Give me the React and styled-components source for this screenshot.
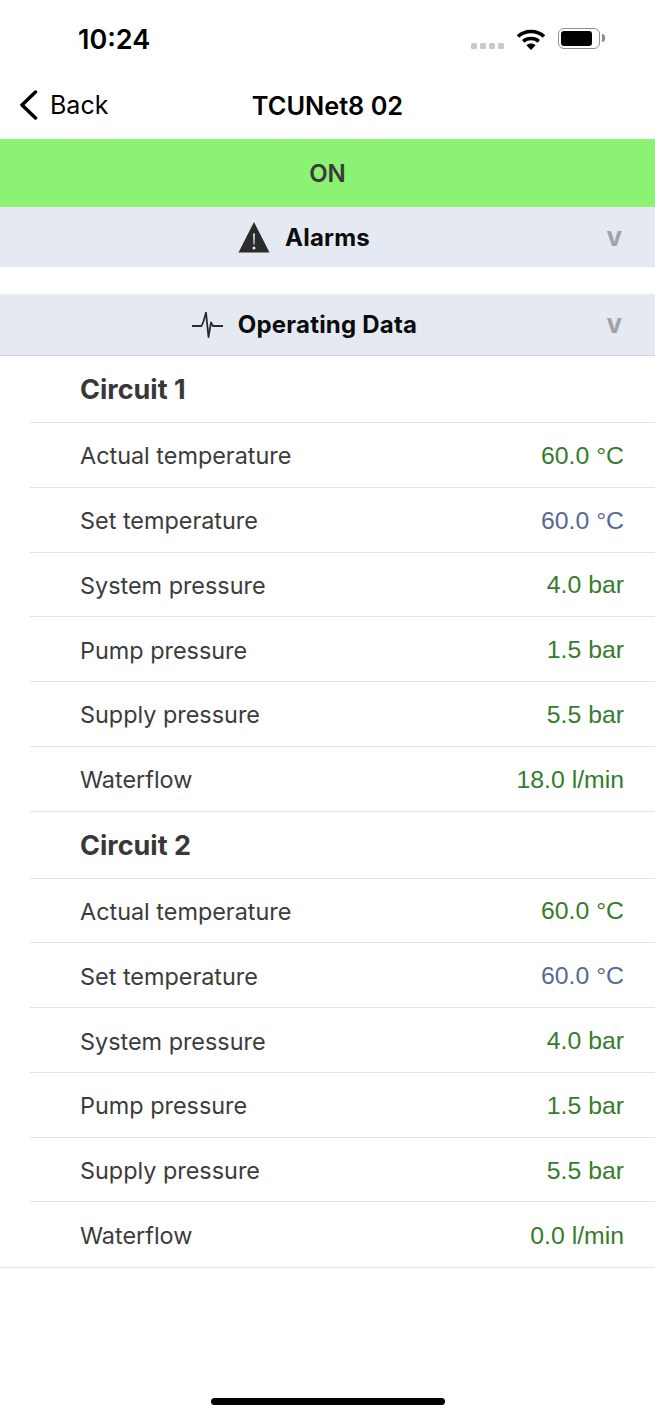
import styled, { createGlobalStyle } from "styled-components";

const GlobalStyle = createGlobalStyle`
  html, body {
    margin: 0;
    padding: 0;
    background: #fff;
  }
  body {
    font-family: "Inter", "Liberation Sans", sans-serif;
  }
`;

const CIRCUITS = [
  {
    name: "Circuit 1",
    rows: [
      ["Actual temperature", "60.0 °C"],
      ["Set temperature", "60.0 °C", true],
      ["System pressure", "4.0 bar"],
      ["Pump pressure", "1.5 bar"],
      ["Supply pressure", "5.5 bar"],
      ["Waterflow", "18.0 l/min"],
    ],
  },
  {
    name: "Circuit 2",
    rows: [
      ["Actual temperature", "60.0 °C"],
      ["Set temperature", "60.0 °C", true],
      ["System pressure", "4.0 bar"],
      ["Pump pressure", "1.5 bar"],
      ["Supply pressure", "5.5 bar"],
      ["Waterflow", "0.0 l/min"],
    ],
  },
];

function App() {
  return (
    <Page>
      <GlobalStyle />
      <StatusBar>
        <Clock>10:24</Clock>
        <StatusIcons>
          <Signal>
            <i />
            <i />
            <i />
            <i />
          </Signal>
          <svg width="30" height="22" viewBox="0 0 30 22">
            <path d="M2 8.500C9 1.800 21 1.800 28 8.500" fill="none" stroke="#000" strokeWidth="3.6" />
            <path d="M7.200 13.400C11.500 9.600 18.500 9.600 22.800 13.400" fill="none" stroke="#000" strokeWidth="3.6" />
            <path d="M10.400 17.200C13 15 17 15 19.600 17.200L15 22Z" fill="#000" />
          </svg>
          <Battery>
            <BatteryFill />
          </Battery>
        </StatusIcons>
      </StatusBar>
      <NavBar>
        <BackLink>
          <svg width="20" height="30" viewBox="0 0 20 30">
            <path d="M17.500 2L4 15L17.500 28" fill="none" stroke="#000" strokeWidth="3.500" strokeLinecap="round" strokeLinejoin="round" />
          </svg>
          <span>Back</span>
        </BackLink>
        <NavTitle>TCUNet8 02</NavTitle>
      </NavBar>
      <StateBanner>ON</StateBanner>
      <SectionHeader>
        <SectionIcon>
          <svg width="32" height="32" viewBox="0 0 32 32">
            <path fillRule="evenodd" fill="#2b2b2b" d="M16 1L31.500 31.500H.5ZM15.100 12.500L15.500 23.500H16.500L16.900 12.500ZM16 25.500a1.500 1.500 0 1 0 0 3a1.500 1.500 0 0 0 0-3Z" />
          </svg>
        </SectionIcon>
        <SectionTitle>Alarms</SectionTitle>
        <Chevron>v</Chevron>
      </SectionHeader>
      <SectionHeader $spaced $bordered>
        <SectionIcon>
          <svg width="31" height="26" viewBox="0 0 31 26">
            <path d="M0 14H9.500L11.500 9.500L14 .5L16.500 25L19 10.500L21 14H31" fill="none" stroke="#2b2b2b" strokeWidth="1.800" strokeLinejoin="round" />
          </svg>
        </SectionIcon>
        <SectionTitle>Operating Data</SectionTitle>
        <Chevron>v</Chevron>
      </SectionHeader>
      <CircuitList>
        {CIRCUITS.map((circuit) => (
          <Circuit key={circuit.name}>
            <CircuitTitle>{circuit.name}</CircuitTitle>
            {circuit.rows.map(([label, value, isSetpoint]) => (
              <DataRow key={label}>
                <Label>{label}</Label>
                <Value $setpoint={isSetpoint}>{value}</Value>
              </DataRow>
            ))}
          </Circuit>
        ))}
      </CircuitList>
      <EndRule />
      <HomeIndicator />
    </Page>
  );
}

const Page = styled.div`
  position: relative;
  width: 655px;
  height: 1417px;
  overflow: hidden;
  background: #fff;
`;

const StatusBar = styled.div`
  height: 70px;
  display: flex;
  align-items: flex-start;
  justify-content: space-between;
  padding: 0 55px 0 78px;
  box-sizing: border-box;
`;

const Clock = styled.div`
  margin-top: 24px;
  font-size: 27px;
  line-height: 32px;
  font-weight: 600;
  color: #000;
`;

const StatusIcons = styled.div`
  display: flex;
  align-items: flex-start;
  margin-top: 28px;
`;

const Signal = styled.div`
  display: flex;
  gap: 3px;
  margin: 15px 12px 0 0;
  i {
    width: 6px;
    height: 6px;
    border-radius: 1.500px;
    background: #c8c8c8;
  }
`;

const Battery = styled.div`
  position: relative;
  width: 42px;
  height: 21px;
  margin-left: 12px;
  padding: 2px;
  box-sizing: border-box;
  border: 1.500px solid #8e8e8e;
  border-radius: 6px;
  &::after {
    content: "";
    position: absolute;
    right: -6px;
    top: 5px;
    width: 3px;
    height: 8px;
    border-radius: 0 3px 3px 0;
    background: #8e8e8e;
  }
`;

const BatteryFill = styled.div`
  width: 31px;
  height: 100%;
  border-radius: 3px;
  background: #000;
`;

const NavBar = styled.div`
  position: relative;
  height: 69px;
  display: flex;
  align-items: center;
  justify-content: center;
`;

const BackLink = styled.div`
  position: absolute;
  left: 18px;
  top: 20px;
  display: flex;
  align-items: center;
  gap: 12px;
  font-size: 25px;
  color: #000;
`;

const NavTitle = styled.div`
  padding-top: 2px;
  font-size: 25.300px;
  font-weight: 600;
  color: #000;
`;

const StateBanner = styled.div`
  height: 68px;
  display: flex;
  align-items: center;
  justify-content: center;
  background: #8bf274;
  color: #3a3a3a;
  font-size: 24px;
  font-weight: 600;
`;

const SectionHeader = styled.div`
  height: ${({ $bordered }) => ($bordered ? "62px" : "60px")};
  margin-top: ${({ $spaced }) => ($spaced ? "27px" : "0")};
  display: grid;
  grid-template-columns: 1fr auto 1fr;
  align-items: center;
  column-gap: 15px;
  box-sizing: border-box;
  background: #e4e9f2;
  border-bottom: ${({ $bordered }) => ($bordered ? "1px solid #d4d6dc" : "none")};
`;

const SectionIcon = styled.div`
  display: flex;
  justify-content: flex-end;
  svg {
    display: block;
  }
`;

const SectionTitle = styled.div`
  font-size: 24px;
  font-weight: 700;
  letter-spacing: 0.2px;
  color: #0c0c0c;
`;

const Chevron = styled.span`
  justify-self: end;
  margin-right: 33px;
  padding-bottom: 2px;
  font-size: 26px;
  font-weight: 700;
  color: #a3a3a3;
`;

const CircuitList = styled.div`
  & > div:last-child > div:last-child {
    border-bottom: none;
  }
`;

const Circuit = styled.div`
  padding-left: 30px;
`;

const CircuitTitle = styled.div`
  height: 67px;
  display: flex;
  align-items: center;
  padding: 1px 0 0 50px;
  box-sizing: border-box;
  border-bottom: 1px solid #e2e2e2;
  font-size: 27px;
  font-weight: 700;
  color: #383838;
`;

const DataRow = styled.div`
  height: 64.770px;
  display: flex;
  align-items: center;
  justify-content: space-between;
  padding: 2px 31px 0 50px;
  box-sizing: border-box;
  border-bottom: 1px solid #e2e2e2;
`;

const Label = styled.span`
  font-size: 23.400px;
  color: #3c3c3c;
`;

const Value = styled.span`
  font-family: "Liberation Sans", sans-serif;
  font-size: 24.800px;
  color: ${({ $setpoint }) => ($setpoint ? "#566a94" : "#367c2b")};
`;

const EndRule = styled.div`
  height: 1px;
  background: #e2e2e2;
`;

const HomeIndicator = styled.div`
  position: absolute;
  left: 211px;
  bottom: 12px;
  width: 234px;
  height: 7px;
  border-radius: 4px;
  background: #000;
`;

export default App;
